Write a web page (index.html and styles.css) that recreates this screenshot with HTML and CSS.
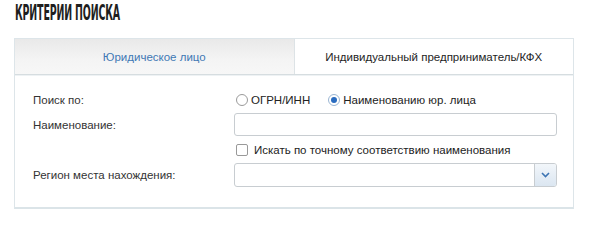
FILE: index.html
```html
<!DOCTYPE html>
<html lang="ru">
	<head>
		<meta charset="UTF-8">
		<title>Критерии поиска</title>
		<link rel="stylesheet" href="styles.css">
	</head>
	<body>
		<h2 class="title">КРИТЕРИИ ПОИСКА</h2>
		<div class="panel">
			<ul class="tabs">
				<li class="tab active"><a href="#">Юридическое лицо</a></li>
				<li class="tab"><a href="#">Индивидуальный предприниматель/КФХ</a></li>
			</ul>
			<div class="form">
				<div class="label">Поиск по:</div>
				<div class="field radios">
					<label class="radio"><span class="dot"></span>ОГРН/ИНН</label>
					<label class="radio checked"><span class="dot"></span>Наименованию юр. лица</label>
				</div>

				<div class="label">Наименование:</div>
				<div class="field"><input type="text" class="text-input"></div>

				<div class="label"></div>
				<div class="field check-row">
					<label class="check"><span class="box"></span>Искать по точному соответствию наименования</label>
				</div>

				<div class="label">Регион места нахождения:</div>
				<div class="field">
					<div class="select">
						<span class="select-value"></span>
						<span class="select-btn">
							<svg width="9" height="6" viewBox="0 0 9 6"><path d="M1 1 L4.5 4.5 L8 1" fill="none" stroke="#3d74b3" stroke-width="1.6"/></svg>
						</span>
					</div>
				</div>
			</div>
		</div>
	</body>
</html>
```

FILE: styles.css
```css
*{
	margin: 0;
	padding: 0;
	box-sizing: border-box;
}
body{
	width: 600px;
	height: 226px;
	background: #fff;
	font-family: "Liberation Sans", Arial, sans-serif;
	font-size: 11.5px;
	color: #333;
	padding: 2px 0 0 14px;
}
a{
	text-decoration: none;
}
ul{
	list-style: none;
}

.title{
	font-family: "DejaVu Sans", sans-serif;
	font-stretch: condensed;
	font-weight: bold;
	font-size: 21px;
	letter-spacing: -0.3px;
	color: #1e1e1e;
	height: 36px;
	line-height: 22px;
	padding-left: 2px;
	transform: scaleX(0.5);
	transform-origin: left;
}

.panel{
	width: 560px;
	border: 1px solid #dde5e9;
	border-bottom: 2px solid #dbe4e8;
}
.tabs{
	display: flex;
	height: 36px;
	border-bottom: 1px solid #d6dde0;
	box-shadow: 0 1px 0 #eef2f4;
}
.tab{
	flex: 1;
	display: flex;
	align-items: center;
	justify-content: center;
}
.tab a{
	color: #1e1e1e;
}
.tab.active{
	background: linear-gradient(#e9e9e9, #f4f4f4 60%, #f7f7f7);
	border-right: 1px solid #dde3e6;
}
.tab.active a{
	color: #3f78b4;
}

.form{
	display: grid;
	grid-template-columns: 201px 323px;
	grid-template-rows: 21px 23px 21px 24px;
	row-gap: 3px;
	padding: 14px 0 20px 18px;
	align-items: center;
}
.label{
	color: #333;
}
.field{
	display: flex;
	align-items: center;
}

.radio{
	display: flex;
	align-items: center;
	color: #222;
}
.radio .dot{
	width: 12px;
	height: 12px;
	border: 1px solid #9a9a9a;
	border-radius: 50%;
	margin: 0 3px 0 2px;
	background: #fff;
	position: relative;
}
.radio.checked .dot{
	border-color: #9bb6d3;
}
.radio.checked .dot:after{
	content: "";
	position: absolute;
	left: 2px;
	top: 2px;
	width: 6px;
	height: 6px;
	border-radius: 50%;
	background: #2a6cc0;
}
.radio.checked{
	margin-left: 16px;
}

.text-input{
	width: 323px;
	height: 23px;
	border: 1px solid #c8cdd1;
	border-radius: 3px;
	background: #fff;
	outline: none;
}

.check{
	display: flex;
	align-items: center;
	color: #222;
}
.check .box{
	width: 12px;
	height: 12px;
	border: 1px solid #999;
	border-radius: 2px;
	margin: 0 6px 0 2px;
	background: #fff;
}

.select{
	width: 323px;
	height: 24px;
	display: flex;
	border: 1px solid #c8cdd1;
	border-radius: 3px;
	overflow: hidden;
}
.select-value{
	flex: 1;
}
.select-btn{
	width: 22px;
	display: flex;
	align-items: center;
	justify-content: center;
	border-left: 1px solid #c8cdd1;
	background: linear-gradient(#f2f6fa, #dbe6f1);
}
```
